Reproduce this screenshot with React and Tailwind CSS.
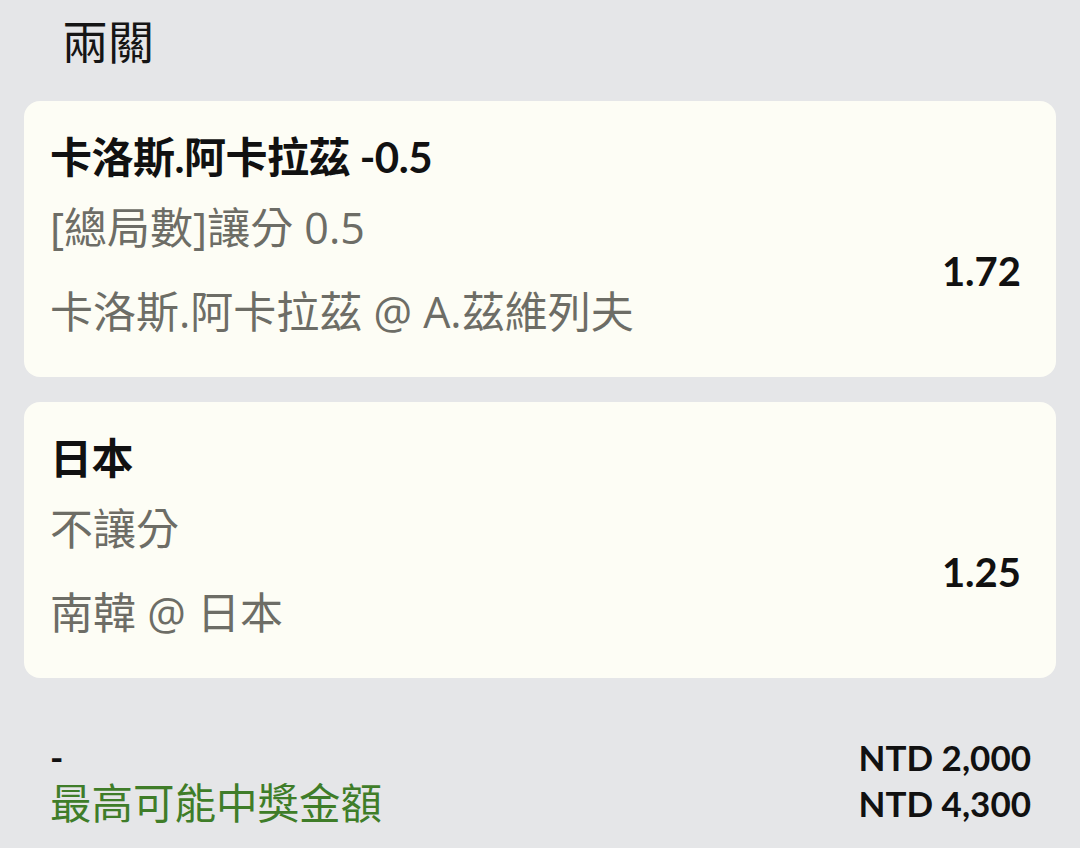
import React from 'react';

const font = { fontFamily: 'Lato, "Noto Sans CJK TC", sans-serif' };
const cjk = { fontFamily: '"Open Sans", "Noto Sans CJK TC", sans-serif' };

const legs = [
  {
    id: 1,
    pick: '卡洛斯.阿卡拉茲 -0.5',
    market: '[總局數]讓分 0.5',
    match: '卡洛斯.阿卡拉茲 @ A.茲維列夫',
    odds: '1.72',
  },
  {
    id: 2,
    pick: '日本',
    market: '不讓分',
    match: '南韓 @ 日本',
    odds: '1.25',
  },
];

const LegCard = ({ leg }) => (
  <div className="bg-[#fdfdf5] rounded-[16px] pl-[26px] pr-[35px] pt-[32px] pb-[41px]">
    <div className="h-[48px] leading-[48px] text-[42px] font-bold text-[#111] tracking-[-0.5px] whitespace-nowrap">
      {leg.pick}
    </div>
    <div className="flex items-center justify-between mt-[23px]">
      <div className="text-[43px] text-[#6d6d66]" style={cjk}>
        <div className="h-[48px] leading-[48px] whitespace-nowrap">{leg.market}</div>
        <div className="h-[48px] leading-[48px] mt-[36px] whitespace-nowrap">{leg.match}</div>
      </div>
      <div className="text-[40px] font-bold text-[#111] leading-[48px] pt-[2px]">{leg.odds}</div>
    </div>
  </div>
);

export default function App() {
  return (
    <div className="w-full h-[848px] bg-[#e5e6e8] px-[24px] overflow-hidden" style={font}>
      <div className="pt-[14px] pl-[38px] h-[101px]">
        <div className="text-[46px] leading-[56px] text-[#151515]">兩關</div>
      </div>

      <div className="flex flex-col gap-[25px]">
        {legs.map((leg) => (
          <LegCard key={leg.id} leg={leg} />
        ))}
      </div>

      {/* Summary */}
      <div className="mt-[56px] pl-[26px] pr-[25px] flex justify-between">
        <div>
          <div className="h-[46px] leading-[46px] text-[36px] font-bold text-[#111]">-</div>
          <div className="h-[46px] leading-[46px] text-[41.5px] text-[#3f7d29]">最高可能中獎金額</div>
        </div>
        <div className="text-right text-[35px] font-bold text-[#111]">
          <div className="h-[46px] leading-[46px]">NTD 2,000</div>
          <div className="h-[46px] leading-[46px]">NTD 4,300</div>
        </div>
      </div>
    </div>
  );
}
